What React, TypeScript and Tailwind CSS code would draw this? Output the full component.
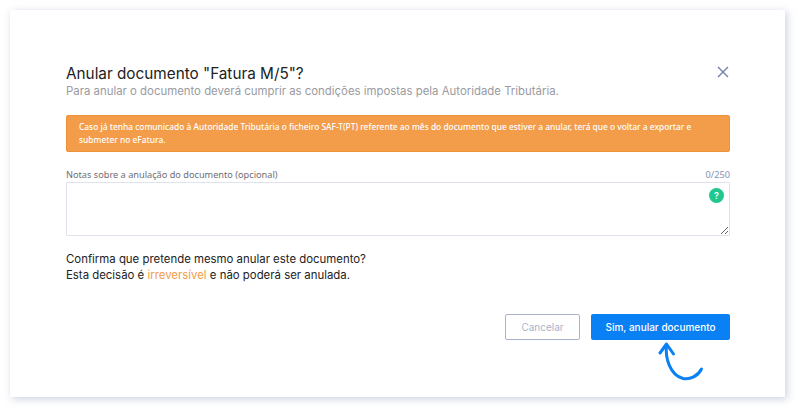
export default function App() {
  return (
    <div className="w-[800px] h-[412px] bg-white pt-[10px] pl-[10px] pr-[15px] pb-[15px] font-['Inter',sans-serif]">
      <div className="h-full bg-white shadow-[2px_2px_8px_rgba(130,140,180,0.4)] pl-[56px] pr-[55px] pt-[54px] flex flex-col">
        <div className="flex justify-between items-start h-[35px]">
          <div>
            <h1 className="text-[15.3px] leading-[20px] text-[#222] font-normal">Anular documento "Fatura M/5"?</h1>
            <p className="text-[11.4px] leading-[15px] text-[#9a9a9f]">Para anular o documento deverá cumprir as condições impostas pela Autoridade Tributária.</p>
          </div>
          <svg width="12" height="12" viewBox="0 0 12 12" className="mt-[2px] mr-[1px]" fill="none" stroke="#6f80a8" strokeWidth="1.4">
            <path d="M1 1 L11 11 M11 1 L1 11" />
          </svg>
        </div>
        <div className="mt-[16px] h-[37px] bg-[#f39c49] border border-[#ee9238] rounded-[2px] px-[12px] pt-[5px] text-[8.4px] leading-[12.5px] text-white font-['Noto_Sans',sans-serif] font-medium">
          Caso já tenha comunicado à Autoridade Tributária o ficheiro SAF-T(PT) referente ao mês do documento que estiver a anular, terá que o voltar a exportar e submeter no eFatura.
        </div>
        <div className="mt-[15px] flex justify-between items-center h-[15px] font-['Noto_Sans',sans-serif] text-[9.2px] leading-[12px]">
          <span className="text-[#6e6e73]">Notas sobre a anulação do documento (opcional)</span>
          <span className="text-[#8492b4]">0/250</span>
        </div>
        <div className="relative">
          <textarea className="block w-full h-[54px] bg-white border border-[#dfe3ee] rounded-[1px] outline-none" />
          <div className="absolute top-[6px] right-[6px] w-[15px] h-[15px] rounded-full bg-[#1fc88f] text-white text-[9px] font-semibold flex items-center justify-center">?</div>
        </div>
        <div className="mt-[16px] text-[11.4px] leading-[15.5px] text-[#222]">
          <p>Confirma que pretende mesmo anular este documento?</p>
          <p>Esta decisão é <span className="text-[#f39c49]">irreversível</span> e não poderá ser anulada.</p>
        </div>
        <div className="mt-[31px] flex justify-end gap-[11px]">
          <button className="w-[75px] h-[26px] bg-white border border-[#a9b3cc] rounded-[2px] text-[10px] text-[#a9b3cc]">Cancelar</button>
          <div className="relative">
            <button className="block w-[139px] h-[26px] bg-[#0a80f5] rounded-[2px] text-[10px] text-white font-medium">Sim, anular documento</button>
            <svg width="50" height="44" viewBox="0 0 50 44" fill="none" stroke="#0a80f5" strokeWidth="3" strokeLinecap="round" strokeLinejoin="round" className="absolute left-[66px] top-[28px]">
              <path d="M3 11 L9.5 2 L16.5 12" />
              <path d="M9.5 3 C8 16 13 33 26 36.5 C33 38 41 34 44.5 27" />
            </svg>
          </div>
        </div>
      </div>
    </div>
  );
}
